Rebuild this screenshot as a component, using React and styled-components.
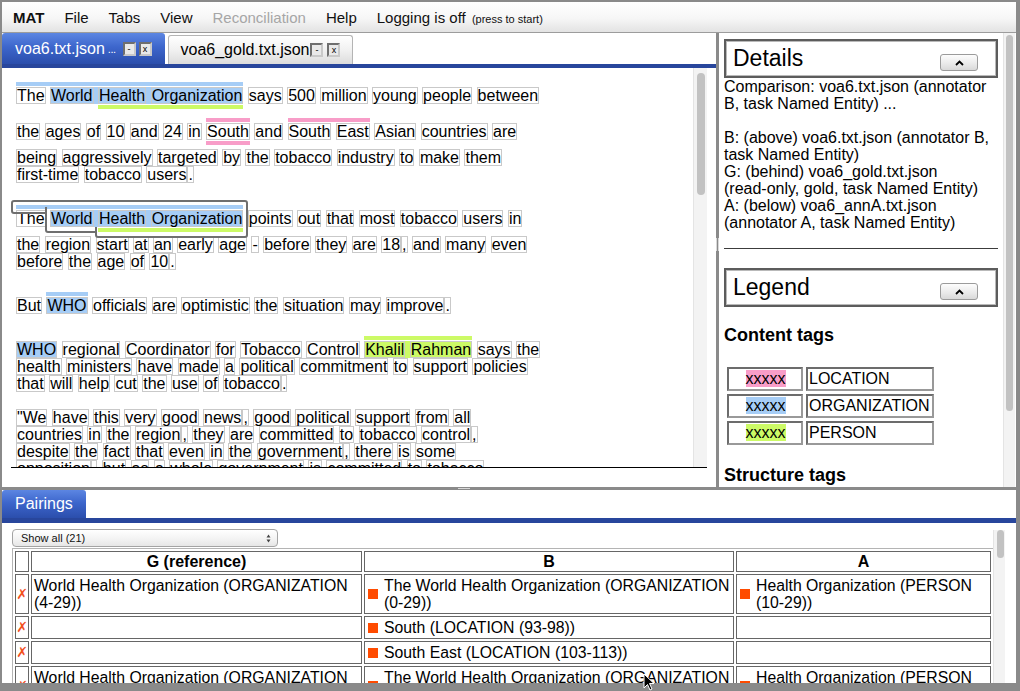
import React from 'react';
import styled, { createGlobalStyle } from 'styled-components';

const BLUE = '#a6cdf6';
const GREEN = '#ccfa66';
const PINK = '#f89dc8';
const MARK = '#ff4b00';
const STRIP = '#28469c';

const GlobalStyle = createGlobalStyle`
  html, body { margin: 0; padding: 0; background: #8a8a8a; }
  body { font-family: "Liberation Sans", Arial, sans-serif; color: #000; }
`;

const Window = styled.div`
  position: relative;
  width: 1020px;
  height: 691px;
  box-sizing: border-box;
  padding: 2px 4px 0 2px;
  background: #8a8a8a;
  display: flex;
  flex-direction: column;
  overflow: hidden;
`;

/* ---------- menu bar ---------- */

const MenuBar = styled.div`
  flex: none;
  height: 30px;
  display: flex;
  align-items: center;
  padding-left: 1px;
  background: linear-gradient(#ffffff, #f6f6f6 55%, #e3e3e3);
  border-bottom: 1px solid #9c9c9c;
  font-size: 15px;
`;

const MenuItem = styled.span`
  padding: 0 10px;
  font-weight: ${(p) => (p.$bold ? 700 : 400)};
  color: ${(p) => (p.$disabled ? '#a6a6a6' : '#111')};
  white-space: nowrap;
`;

const Hint = styled.span`
  font-size: 11px;
  margin-left: 2px;
`;

/* ---------- top area ---------- */

const TopArea = styled.div`
  flex: none;
  height: 454px;
  display: flex;
`;

const LeftPane = styled.div`
  width: 714px;
  display: flex;
  flex-direction: column;
  background: #fff;
`;

const TabBar = styled.div`
  flex: none;
  height: ${(p) => p.$h}px;
  display: flex;
  align-items: flex-end;
  background: #fff;
`;

const Tab = styled.div`
  box-sizing: border-box;
  height: ${(p) => (p.$active ? p.$h : p.$h - 2)}px;
  margin-left: ${(p) => (p.$active ? 0 : 3)}px;
  padding: 0 ${(p) => (p.$active ? 13 : 12)}px;
  display: flex;
  align-items: center;
  font-size: 16px;
  white-space: nowrap;
  color: ${(p) => (p.$active ? '#fff' : '#000')};
  background: ${(p) =>
    p.$active
      ? 'linear-gradient(#5c86e2, #3d66cc 45%, #2b4eac)'
      : 'linear-gradient(#ffffff, #f1f1f1 50%, #dcdcdc)'};
  border: ${(p) => (p.$active ? 'none' : '1px solid #b4b4b4')};
  border-bottom: none;
  border-radius: 3px 3px 0 0;
`;

const Dots = styled.span`
  font-size: 11px;
  margin-left: 3px;
  letter-spacing: -0.5px;
`;

const TabButton = styled.span`
  box-sizing: border-box;
  width: 13px;
  height: 14px;
  margin-left: ${(p) => p.$gap}px;
  border: 2px solid;
  border-color: #6e6e6e #c9c9c9 #c9c9c9 #6e6e6e;
  background: #e9e9e9;
  color: #000;
  font-size: 9px;
  line-height: 10px;
  text-align: center;
`;

const Strip = styled.div`
  flex: none;
  height: ${(p) => p.$h}px;
  background: ${STRIP};
`;

const EditorArea = styled.div`
  flex: 1;
  background: #fff;
  padding-left: 9px;
`;

const TextScroll = styled.div`
  width: 696px;
  height: 399px;
  border-bottom: 1px solid #000;
  display: flex;
  overflow: hidden;
`;

const TextBody = styled.div`
  position: relative;
  flex: 1;
  padding: 9px 0 0 5px;
`;

const Paragraph = styled.div`
  margin-bottom: 17px;
`;

const Line = styled.div`
  display: flex;
  padding-top: ${(p) => (p.$above ? 10 : 0)}px;
  padding-bottom: ${(p) => (p.$below ? 9 : 0)}px;
`;

const Word = styled.span`
  position: relative;
  box-sizing: border-box;
  height: 17px;
  border: 1px solid #c9c9c9;
  font-size: 16px;
  line-height: 15px;
  white-space: nowrap;
  background: ${(p) => p.$bg || 'transparent'};
`;

const Gap = styled.span`
  position: relative;
  box-sizing: border-box;
  width: 4.45px;
  height: 17px;
  border-top: 1px solid transparent;
  border-bottom: 1px solid transparent;
  background: ${(p) => p.$bg || 'transparent'};
`;

const Bar = styled.span`
  position: absolute;
  left: ${(p) => p.$inset}px;
  right: ${(p) => p.$inset}px;
  height: 4px;
  background: ${(p) => p.$color};
  top: ${(p) => (p.$below ? 'calc(100% + 2px)' : '-6px')};
`;

const HoverOutline = styled.svg`
  position: absolute;
  left: 0;
  top: 132px;
  overflow: visible;
`;

const ScrollTrack = styled.div`
  flex: none;
  box-sizing: border-box;
  width: ${(p) => p.$w}px;
  margin-top: ${(p) => p.$top || 0}px;
  padding-top: ${(p) => p.$pad}px;
  background: #f3f3f3;
  border-left: 1px solid #e4e4e4;
`;

const Thumb = styled.div`
  width: ${(p) => p.$w}px;
  height: ${(p) => p.$h}px;
  margin-left: ${(p) => p.$ml}px;
  border-radius: 4px;
  background: #c2c2c2;
`;

const VSplitter = styled.div`
  width: 3px;
  display: flex;
  flex-direction: column;
  align-items: center;
`;

const VGrip = styled.div`
  margin-top: 205px;
  width: 3px;
  height: 13px;
  border-left: 1px solid #d8d8d8;
  border-right: 1px solid #d8d8d8;
  box-sizing: border-box;
`;

/* ---------- right pane ---------- */

const RightPane = styled.div`
  width: 297px;
  display: flex;
  background: #fff;
  overflow: hidden;
`;

const RightContent = styled.div`
  width: 279px;
  padding: 6px 0 0 5px;
  flex: none;
`;

const SectionBox = styled.div`
  box-sizing: border-box;
  width: 274px;
  height: 39px;
  border: 2px solid #5c5c5c;
  box-shadow: inset 0 0 0 1px #b9b9b9;
  display: flex;
  align-items: center;
  justify-content: space-between;
  padding: 0 18px 0 7px;
  font-size: 23px;
`;

const CollapseButton = styled.div`
  box-sizing: border-box;
  width: 38px;
  height: 17px;
  margin-top: 8px;
  border: 1px solid #9b9b9b;
  border-radius: 3px;
  background: linear-gradient(#fdfdfd, #e9e9e9 60%, #d9d9d9);
  display: flex;
  align-items: center;
  justify-content: center;
`;

const DetailsText = styled.div`
  font-size: 16px;
  line-height: 17px;
  width: 274px;
  white-space: nowrap;
`;

const Blank = styled.div`
  height: 17px;
`;

const Rule = styled.div`
  width: 274px;
  margin: 17px 0 19px;
  border-top: 1px solid #3c3c3c;
`;

const TagHeading = styled.div`
  font-size: 18px;
  font-weight: 700;
  line-height: 21px;
  margin: ${(p) => p.$mt}px 0 ${(p) => p.$mb}px;
`;

const LegendTable = styled.table`
  table-layout: fixed;
  width: 213px;
  border-spacing: 3px;
  margin-top: -3px;
`;

const LegendCell = styled.td`
  box-sizing: border-box;
  height: 24px;
  width: ${(p) => p.$w}px;
  padding: 0 0 0 1px;
  border: 2px solid;
  border-color: #6c6c6c #999 #999 #6c6c6c;
  font-size: 16px;
  text-align: ${(p) => (p.$center ? 'center' : 'left')};
  overflow: hidden;
  white-space: nowrap;
`;

const Swatch = styled.span`
  font-size: 16px;
  line-height: 17px;
  display: inline-block;
  background: ${(p) => p.$color};
`;

/* ---------- bottom ---------- */

const HSplitter = styled.div`
  flex: none;
  height: 3px;
  display: flex;
  justify-content: center;
`;

const HGrip = styled.div`
  margin: 1px 0 0 -90px;
  width: 12px;
  height: 3px;
  border-top: 1px solid #d8d8d8;
  border-bottom: 1px solid #d8d8d8;
  box-sizing: border-box;
`;

const BottomPane = styled.div`
  flex: none;
  height: 193px;
  display: flex;
  flex-direction: column;
  background: #fff;
  overflow: hidden;
`;

const PairBody = styled.div`
  flex: 1;
  display: flex;
  overflow: hidden;
`;

const PairContent = styled.div`
  width: 981px;
  padding: 6px 0 0 10px;
`;

const Select = styled.div`
  box-sizing: border-box;
  width: 266px;
  height: 18px;
  border: 1px solid #a4a4a4;
  border-radius: 4px;
  background: linear-gradient(#ffffff, #f2f2f2 60%, #e6e6e6);
  display: flex;
  align-items: center;
  justify-content: space-between;
  padding: 0 6px 0 8px;
  font-size: 11px;
  color: #111;
`;

const PairTable = styled.table`
  width: 980px;
  margin-top: 1px;
  table-layout: fixed;
  border: 1px solid #b4b4b4;
  border-spacing: 2px;
`;

const HeadCell = styled.th`
  border: 1px solid #666;
  padding: 1px 2px;
  font-size: 16px;
  line-height: 17px;
  font-weight: 700;
`;

const Cell = styled.td`
  border: 1px solid #666;
  padding: 2px 0 2px 2px;
  font-size: 15.8px;
  line-height: 17px;
  vertical-align: middle;
`;

const MarkCell = styled(Cell)`
  padding: 0;
  text-align: center;
  color: #f2501e;
  font-family: "DejaVu Sans", sans-serif;
  font-size: 14px;
`;

const Entry = styled.div`
  display: flex;
  align-items: center;
`;

const Square = styled.span`
  flex: none;
  width: 10px;
  height: 10px;
  margin: 0 6px 0 1px;
  background: ${MARK};
`;

const NoWrap = styled.span`
  white-space: nowrap;
`;

const Cursor = styled.svg`
  position: absolute;
  left: 643px;
  top: 673px;
`;

/* ---------- data ---------- */

const tokenize = (text) => {
  const out = [];
  text.split(' ').forEach((w, i) => {
    const m = w.match(/^(.+?)([.,]?)$/);
    out.push({ t: m[1], sp: i > 0 });
    if (m[2]) out.push({ t: m[2], sp: false });
  });
  return out;
};

const whoMarks = [
  { k: 'above', c: BLUE, a: 0, b: 3 },
  { k: 'bg', c: BLUE, a: 1, b: 3 },
  { k: 'below', c: GREEN, a: 2, b: 3 },
];

const paragraphs = [
  [
    { text: 'The World Health Organization says 500 million young people between', marks: whoMarks },
    {
      text: 'the ages of 10 and 24 in South and South East Asian countries are',
      marks: [
        { k: 'above', c: PINK, a: 7, b: 7 },
        { k: 'above', c: PINK, a: 9, b: 10 },
        { k: 'below', c: PINK, a: 7, b: 7 },
      ],
    },
    { text: 'being aggressively targeted by the tobacco industry to make them' },
    { text: 'first-time tobacco users.' },
  ],
  [
    { text: 'The World Health Organization points out that most tobacco users in', marks: whoMarks },
    { text: 'the region start at an early age - before they are 18, and many even' },
    { text: 'before the age of 10.' },
  ],
  [
    {
      text: 'But WHO officials are optimistic the situation may improve.',
      marks: [
        { k: 'above', c: BLUE, a: 1, b: 1 },
        { k: 'bg', c: BLUE, a: 1, b: 1 },
      ],
    },
  ],
  [
    {
      text: 'WHO regional Coordinator for Tobacco Control Khalil Rahman says the',
      marks: [
        { k: 'bg', c: BLUE, a: 0, b: 0 },
        { k: 'above', c: GREEN, a: 6, b: 7 },
        { k: 'bg', c: GREEN, a: 6, b: 7 },
      ],
    },
    { text: 'health ministers have made a political commitment to support policies' },
    { text: 'that will help cut the use of tobacco.' },
  ],
  [
    { text: '"We have this very good news, good political support from all' },
    { text: 'countries in the region, they are committed to tobacco control,' },
    { text: 'despite the fact that even in the government, there is some' },
    { text: 'opposition, but as a whole government is committed to tobacco' },
  ],
];

const WHO_G = { name: 'World Health Organization (ORGANIZATION', span: '(4-29))' };
const WHO_B = { name: 'The World Health Organization (ORGANIZATION', span: '(0-29))' };
const HO_A = { name: 'Health Organization (PERSON', span: '(10-29))' };

const pairings = [
  { g: WHO_G, b: WHO_B, a: HO_A },
  { g: null, b: { name: 'South (LOCATION', span: '(93-98))' }, a: null },
  { g: null, b: { name: 'South East (LOCATION', span: '(103-113))' }, a: null },
  { g: WHO_G, b: WHO_B, a: HO_A },
];

const legend = [
  { color: PINK, label: 'LOCATION' },
  { color: BLUE, label: 'ORGANIZATION' },
  { color: GREEN, label: 'PERSON' },
];

/* ---------- pieces ---------- */

const Bars = ({ items, inset }) =>
  items.map((m, j) => <Bar key={j} $inset={inset} $color={m.c} $below={m.k === 'below'} />);

const AnnotatedLine = ({ text, marks = [] }) => {
  const toks = tokenize(text);
  const on = (i) => marks.filter((m) => i >= m.a && i <= m.b);
  const across = (i) => marks.filter((m) => i - 1 >= m.a && i <= m.b);
  const bgOf = (list) => (list.find((m) => m.k === 'bg') || {}).c;
  const barsOf = (list) => list.filter((m) => m.k !== 'bg');
  return (
    <Line $above={marks.some((m) => m.k === 'above')} $below={marks.some((m) => m.k === 'below')}>
      {toks.map((tk, i) => (
        <React.Fragment key={i}>
          {tk.sp && (
            <Gap $bg={bgOf(across(i))}>
              <Bars items={barsOf(across(i))} inset={0} />
            </Gap>
          )}
          <Word $bg={bgOf(on(i))}>
            {tk.t}
            <Bars items={barsOf(on(i))} inset={-1} />
          </Word>
        </React.Fragment>
      ))}
    </Line>
  );
};

const Caret = () => (
  <svg width="9" height="6" viewBox="0 0 9 6">
    <path d="M1 5 L4.5 1.5 L8 5" fill="none" stroke="#000" strokeWidth="1.8" />
  </svg>
);

const Label = ({ item }) => (
  <span>
    {item.name} <NoWrap>{item.span}</NoWrap>
  </span>
);

const Entity = ({ item }) =>
  item ? (
    <Entry>
      <Square />
      <Label item={item} />
    </Entry>
  ) : null;

export default function App() {
  return (
    <>
      <GlobalStyle />
      <Window>
        <MenuBar>
          <MenuItem $bold>MAT</MenuItem>
          <MenuItem>File</MenuItem>
          <MenuItem>Tabs</MenuItem>
          <MenuItem>View</MenuItem>
          <MenuItem $disabled>Reconciliation</MenuItem>
          <MenuItem>Help</MenuItem>
          <MenuItem>
            Logging is off <Hint>(press to start)</Hint>
          </MenuItem>
        </MenuBar>

        <TopArea>
          <LeftPane>
            <TabBar $h={31}>
              <Tab $active $h={31}>
                voa6.txt.json<Dots>...</Dots>
                <TabButton $gap={7}>-</TabButton>
                <TabButton $gap={3}>x</TabButton>
              </Tab>
              <Tab $h={31}>
                voa6_gold.txt.json
                <TabButton $gap={1}>-</TabButton>
                <TabButton $gap={4}>x</TabButton>
              </Tab>
            </TabBar>
            <Strip $h={4} />
            <EditorArea>
              <TextScroll>
                <TextBody>
                  {paragraphs.map((lines, p) => (
                    <Paragraph key={p}>
                      {lines.map((l, i) => (
                        <AnnotatedLine key={i} text={l.text} marks={l.marks} />
                      ))}
                    </Paragraph>
                  ))}
                  <HoverOutline width="240" height="40">
                    <g fill="none" stroke="#6f6f6f" strokeWidth="2">
                      <path d="M35 13 H3 Q1 13 1 11 V3 Q1 1 3 1 H234 Q236 1 236 3 V35 Q236 37 234 37 H87 Q85 37 85 35 V27" />
                      <path d="M35 7 V30 Q35 32 37 32 H85" />
                    </g>
                  </HoverOutline>
                </TextBody>
                <ScrollTrack $w={14} $pad={5}>
                  <Thumb $w={8} $h={122} $ml={3} />
                </ScrollTrack>
              </TextScroll>
            </EditorArea>
          </LeftPane>

          <VSplitter>
            <VGrip />
          </VSplitter>

          <RightPane>
            <RightContent>
              <SectionBox>
                Details
                <CollapseButton>
                  <Caret />
                </CollapseButton>
              </SectionBox>
              <DetailsText>
                <div>Comparison: voa6.txt.json (annotator</div>
                <div>B, task Named Entity) ...</div>
                <Blank />
                <div>B: (above) voa6.txt.json (annotator B,</div>
                <div>task Named Entity)</div>
                <div>G: (behind) voa6_gold.txt.json</div>
                <div>(read-only, gold, task Named Entity)</div>
                <div>A: (below) voa6_annA.txt.json</div>
                <div>(annotator A, task Named Entity)</div>
              </DetailsText>
              <Rule />
              <SectionBox>
                Legend
                <CollapseButton>
                  <Caret />
                </CollapseButton>
              </SectionBox>
              <TagHeading $mt={18} $mb={21}>Content tags</TagHeading>
              <LegendTable>
                <tbody>
                  {legend.map((row) => (
                    <tr key={row.label}>
                      <LegendCell $w={76} $center>
                        <Swatch $color={row.color}>xxxxx</Swatch>
                      </LegendCell>
                      <LegendCell $w={128}>{row.label}</LegendCell>
                    </tr>
                  ))}
                </tbody>
              </LegendTable>
              <TagHeading $mt={17} $mb={0}>Structure tags</TagHeading>
            </RightContent>
            <ScrollTrack $w={12} $pad={2}>
              <Thumb $w={7} $h={376} $ml={2} />
            </ScrollTrack>
          </RightPane>
        </TopArea>

        <HSplitter>
          <HGrip />
        </HSplitter>

        <BottomPane>
          <TabBar $h={28}>
            <Tab $active $h={28}>Pairings</Tab>
          </TabBar>
          <Strip $h={5} />
          <PairBody>
            <PairContent>
              <Select>
                <span>Show all (21)</span>
                <svg width="5" height="9" viewBox="0 0 5 9">
                  <path d="M0.5 3.5 L2.5 0.5 L4.5 3.5 Z M0.5 5.5 L2.5 8.5 L4.5 5.5 Z" fill="#444" />
                </svg>
              </Select>
              <PairTable>
                <colgroup>
                  <col style={{ width: 14 }} />
                  <col style={{ width: 331 }} />
                  <col style={{ width: 370 }} />
                  <col style={{ width: 255 }} />
                </colgroup>
                <thead>
                  <tr>
                    <HeadCell />
                    <HeadCell>G (reference)</HeadCell>
                    <HeadCell>B</HeadCell>
                    <HeadCell>A</HeadCell>
                  </tr>
                </thead>
                <tbody>
                  {pairings.map((row, i) => (
                    <tr key={i}>
                      <MarkCell>✗</MarkCell>
                      <Cell>{row.g && <Label item={row.g} />}</Cell>
                      <Cell>
                        <Entity item={row.b} />
                      </Cell>
                      <Cell>
                        <Entity item={row.a} />
                      </Cell>
                    </tr>
                  ))}
                </tbody>
              </PairTable>
            </PairContent>
            <ScrollTrack $w={12} $pad={0} $top={7}>
              <Thumb $w={7} $h={28} $ml={3} />
            </ScrollTrack>
          </PairBody>
        </BottomPane>

        <Cursor width="12" height="18" viewBox="0 0 12 18">
          <path d="M1 1 L1 15 L4.5 11.5 L7 17 L9 16 L6.5 10.5 L11 10.5 Z" fill="#000" stroke="#fff" strokeWidth="1" />
        </Cursor>
      </Window>
    </>
  );
}
